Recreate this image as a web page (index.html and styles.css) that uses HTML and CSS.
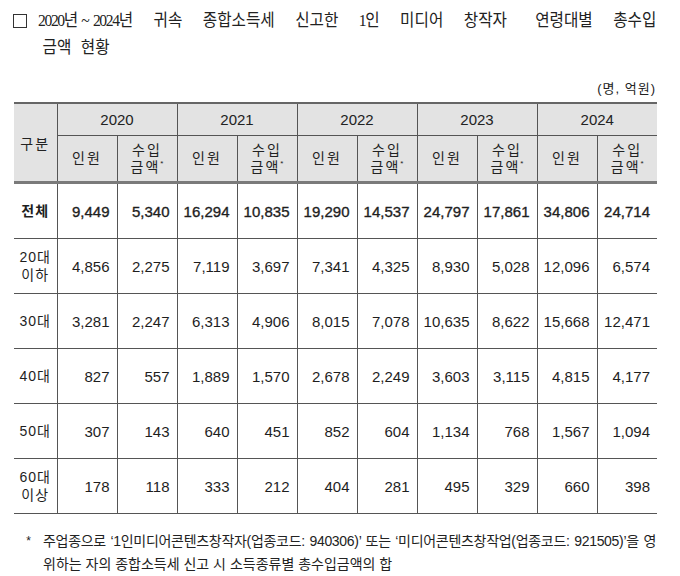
FILE: index.html
```html
<!DOCTYPE html>
<html lang="ko">
<head>
<meta charset="utf-8">
<link rel="stylesheet" href="styles.css">
</head>
<body>
<div class="page">
  <div class="title">
    <span class="box"></span>
    <div class="title-text">
      <div class="tline"><span class="num">2020</span>년&#8201;~&#8201;<span class="num">2024</span>년 귀속 종합소득세 신고한 <span class="num">1</span>인 미디어 창작자 &#8194;연령대별 총수입</div>
      <div class="tline second">금액 현황</div>
    </div>
  </div>
  <div class="unit">(명, 억원)</div>
  <table class="tbl">
    <colgroup>
      <col class="c0">
      <col class="cn"><col class="cn"><col class="cn"><col class="cn"><col class="cn">
      <col class="cn"><col class="cn"><col class="cn"><col class="cn"><col class="cn">
    </colgroup>
    <thead>
      <tr class="h1">
        <th rowspan="2" class="first">구분</th>
        <th colspan="2">2020</th>
        <th colspan="2">2021</th>
        <th colspan="2">2022</th>
        <th colspan="2">2023</th>
        <th colspan="2" class="last">2024</th>
      </tr>
      <tr class="h2">
        <th>인원</th><th>수입<br>금액<sup>*</sup></th>
        <th>인원</th><th>수입<br>금액<sup>*</sup></th>
        <th>인원</th><th>수입<br>금액<sup>*</sup></th>
        <th>인원</th><th>수입<br>금액<sup>*</sup></th>
        <th>인원</th><th class="last">수입<br>금액<sup>*</sup></th>
      </tr>
    </thead>
    <tbody>
      <tr class="total">
        <td class="first lbl">전체</td>
        <td>9,449</td><td>5,340</td><td>16,294</td><td>10,835</td><td>19,290</td><td>14,537</td><td>24,797</td><td>17,861</td><td>34,806</td><td class="last">24,714</td>
      </tr>
      <tr>
        <td class="first lbl">20대<br>이하</td>
        <td>4,856</td><td>2,275</td><td>7,119</td><td>3,697</td><td>7,341</td><td>4,325</td><td>8,930</td><td>5,028</td><td>12,096</td><td class="last">6,574</td>
      </tr>
      <tr>
        <td class="first lbl">30대</td>
        <td>3,281</td><td>2,247</td><td>6,313</td><td>4,906</td><td>8,015</td><td>7,078</td><td>10,635</td><td>8,622</td><td>15,668</td><td class="last">12,471</td>
      </tr>
      <tr>
        <td class="first lbl">40대</td>
        <td>827</td><td>557</td><td>1,889</td><td>1,570</td><td>2,678</td><td>2,249</td><td>3,603</td><td>3,115</td><td>4,815</td><td class="last">4,177</td>
      </tr>
      <tr>
        <td class="first lbl">50대</td>
        <td>307</td><td>143</td><td>640</td><td>451</td><td>852</td><td>604</td><td>1,134</td><td>768</td><td>1,567</td><td class="last">1,094</td>
      </tr>
      <tr>
        <td class="first lbl">60대<br>이상</td>
        <td>178</td><td>118</td><td>333</td><td>212</td><td>404</td><td>281</td><td>495</td><td>329</td><td>660</td><td class="last">398</td>
      </tr>
    </tbody>
  </table>
  <div class="note">
    <span class="star">*</span>
    <div class="note-text">
      <div class="nline1">주업종으로 ‘1인미디어콘텐츠창작자(업종코드: 940306)’ 또는 ‘미디어콘텐츠창작업(업종코드: 921505)’을 영</div>
      <div class="nline2">위하는 자의 종합소득세 신고 시 소득종류별 총수입금액의 합</div>
    </div>
  </div>
</div>
</body>
</html>
```

FILE: styles.css
```css
html, body {
  margin: 0;
  padding: 0;
  background: #ffffff;
}
body {
  color: #1e1e1e;
  font-family: "Liberation Sans", "Noto Sans CJK KR", sans-serif;
}
.page {
  width: 680px;
  padding: 0 0 0 14px;
  box-sizing: border-box;
}
.title {
  display: flex;
  align-items: flex-start;
  padding-top: 7px;
  font-family: "Liberation Serif", "Noto Sans CJK KR", serif;
  font-size: 17px;
  line-height: 27px;
  color: #222;
}
.box {
  flex: none;
  width: 12px;
  height: 12px;
  border: 1px solid #333;
  margin-top: 7px;
  margin-left: -1px;
  margin-right: 11px;
}
.title-text {
  flex: 1;
  transform: scaleX(0.92);
  transform-origin: left top;
}
.tline {
  word-spacing: 18px;
  white-space: nowrap;
}
.num {
  letter-spacing: -1.5px;
}
.tline.second {
  padding-left: 5px;
  word-spacing: 6px;
}
.unit {
  width: 642px;
  text-align: right;
  font-size: 13px;
  line-height: 18px;
  margin-top: 19px;
  margin-bottom: 4px;
  letter-spacing: 1px;
  color: #222;
}
.tbl {
  border-collapse: collapse;
  table-layout: fixed;
  width: 643px;
  font-size: 15px;
}
.c0 { width: 43px; }
.cn { width: 60px; }
.tbl th, .tbl td {
  border: 1px solid #555;
  padding: 0;
}
.tbl .first { border-left: none; }
.tbl .last { border-right: none; }
.tbl thead tr.h1 th {
  border-top: 2px solid #666;
}
.tbl th {
  background: #e3e3e3;
  font-weight: normal;
  text-align: center;
  vertical-align: middle;
  color: #222;
}
.h1 th {
  height: 31px;
  font-size: 15px;
}
.h2 th {
  height: 45px;
  font-size: 14px;
  line-height: 17px;
  letter-spacing: 2px;
  border-bottom: 3px solid #7a7a7a;
}
.h1 th.first {
  font-size: 14px;
  letter-spacing: 2px;
  border-bottom: 3px solid #7a7a7a;
}
sup {
  font-size: 8px;
  vertical-align: top;
  line-height: 8px;
  letter-spacing: 0;
  position: relative;
  top: 1px;
}
.tbl td {
  height: 54px;
  text-align: right;
  padding-right: 7px;
  vertical-align: middle;
}
.tbl td.lbl {
  text-align: center;
  padding: 0;
  font-size: 14px;
  line-height: 18px;
  letter-spacing: 1px;
}
.total td {
  -webkit-text-stroke: 0.35px #1e1e1e;
}
.total td.lbl {
  font-weight: bold;
  -webkit-text-stroke: 0;
}
.tbl tbody tr:last-child td {
  border-bottom: 1px solid #555;
}
.note {
  display: flex;
  width: 642px;
  margin-top: 16px;
  font-size: 14px;
  line-height: 23px;
  color: #222;
}
.star {
  flex: none;
  width: 29px;
  text-align: right;
  box-sizing: border-box;
  font-size: 12px;
  padding-right: 12px;
}
.note-text {
  flex: 1;
}
.nline1 {
  text-align: justify;
  text-align-last: justify;
  letter-spacing: -0.3px;
}
```
